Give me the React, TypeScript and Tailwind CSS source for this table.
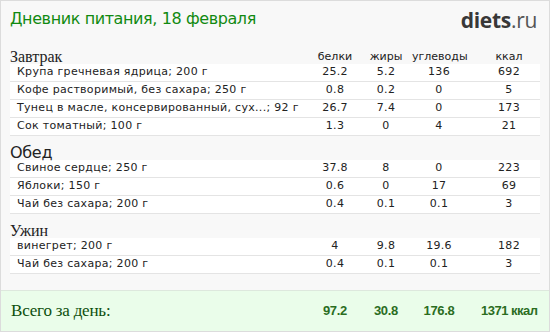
import React from 'react';

type Item = { name: string; p: string; f: string; c: string; k: string };
type Meal = { title: string; font: string; items: Item[] };

const meals: Meal[] = [
  {
    title: 'Завтрак',
    font: "font-['Liberation_Serif',serif]",
    items: [
      { name: 'Крупа гречневая ядрица; 200 г', p: '25.2', f: '5.2', c: '136', k: '692' },
      { name: 'Кофе растворимый, без сахара; 250 г', p: '0.8', f: '0.2', c: '0', k: '5' },
      { name: 'Тунец в масле, консервированный, сух...; 92 г', p: '26.7', f: '7.4', c: '0', k: '173' },
      { name: 'Сок томатный; 100 г', p: '1.3', f: '0', c: '4', k: '21' },
    ],
  },
  {
    title: 'Обед',
    font: "font-['DejaVu_Sans',sans-serif] text-[14px] tracking-[-0.3px]",
    items: [
      { name: 'Свиное сердце; 250 г', p: '37.8', f: '8', c: '0', k: '223' },
      { name: 'Яблоки; 150 г', p: '0.6', f: '0', c: '17', k: '69' },
      { name: 'Чай без сахара; 200 г', p: '0.4', f: '0.1', c: '0.1', k: '3' },
    ],
  },
  {
    title: 'Ужин',
    font: "font-['Liberation_Serif',serif]",
    items: [
      { name: 'винегрет; 200 г', p: '4', f: '9.8', c: '19.6', k: '182' },
      { name: 'Чай без сахара; 200 г', p: '0.4', f: '0.1', c: '0.1', k: '3' },
    ],
  },
];

const cols = 'grid grid-cols-[300px_50px_52px_54px_71px]';
const total = "text-center text-[13px] font-bold text-[#2b6d1f] font-['Liberation_Sans',sans-serif] tracking-[-0.3px]";
const label = "text-center text-[11px] font-['DejaVu_Sans',sans-serif] pt-[5px]";

const App: React.FC = () => {
  return (
    <div className="w-[550px] h-[332px] border border-[#dcdcdc] bg-[#f8f8f8] flex flex-col overflow-hidden text-[#222]">
      <div className="h-[39px] flex items-start justify-between pl-[9px] pr-[12px] pt-[6px]">
        <h1 className="text-[16px] text-[#118a11] font-['DejaVu_Sans',sans-serif] tracking-[-0.4px]">
          Дневник питания, 18 февраля
        </h1>
        <div className="text-[21px] leading-[26px] font-['Open_Sans',sans-serif] tracking-[-0.3px]">
          <span className="font-bold text-[#383838]">diets</span>
          <span className="text-[#555]">.ru</span>
        </div>
      </div>

      <div className="px-[9px]">
        {meals.map((meal, i) => (
          <div key={meal.title}>
            <div className={`${cols} h-[24px] items-center`}>
              <div className={`text-[16px] pt-[5px] ${meal.font}`}>{meal.title}</div>
              {i === 0 && (
                <>
                  <div className={label}>белки</div>
                  <div className={label}>жиры</div>
                  <div className={label}>углеводы</div>
                  <div className={`${label} pl-[15px]`}>ккал</div>
                </>
              )}
            </div>
            {meal.items.map((it, j) => (
              <div
                key={j}
                className={`${cols} h-[18px] items-center bg-white border-b border-[#e4e4e4] text-[11px] font-['DejaVu_Sans',sans-serif] tracking-[0.3px]`}
              >
                <div className="pl-[7px] whitespace-nowrap">{it.name}</div>
                <div className="text-center">{it.p}</div>
                <div className="text-center">{it.f}</div>
                <div className="text-center">{it.c}</div>
                <div className="text-center pl-[15px]">{it.k}</div>
              </div>
            ))}
          </div>
        ))}
      </div>

      <div className={`mt-auto h-[41px] bg-[#eafdea] border-t border-[#dde8dd] px-[9px] ${cols} items-center`}>
        <div className="text-[17px] text-[#0d4f0d] font-['Liberation_Serif',serif] pl-[1px] tracking-[-0.2px]">Всего за день:</div>
        <div className={total}>97.2</div>
        <div className={total}>30.8</div>
        <div className={total}>176.8</div>
        <div className={`${total} pl-[15px] whitespace-nowrap tracking-[-0.5px]`}>1371 ккал</div>
      </div>
    </div>
  );
};

export default App;
